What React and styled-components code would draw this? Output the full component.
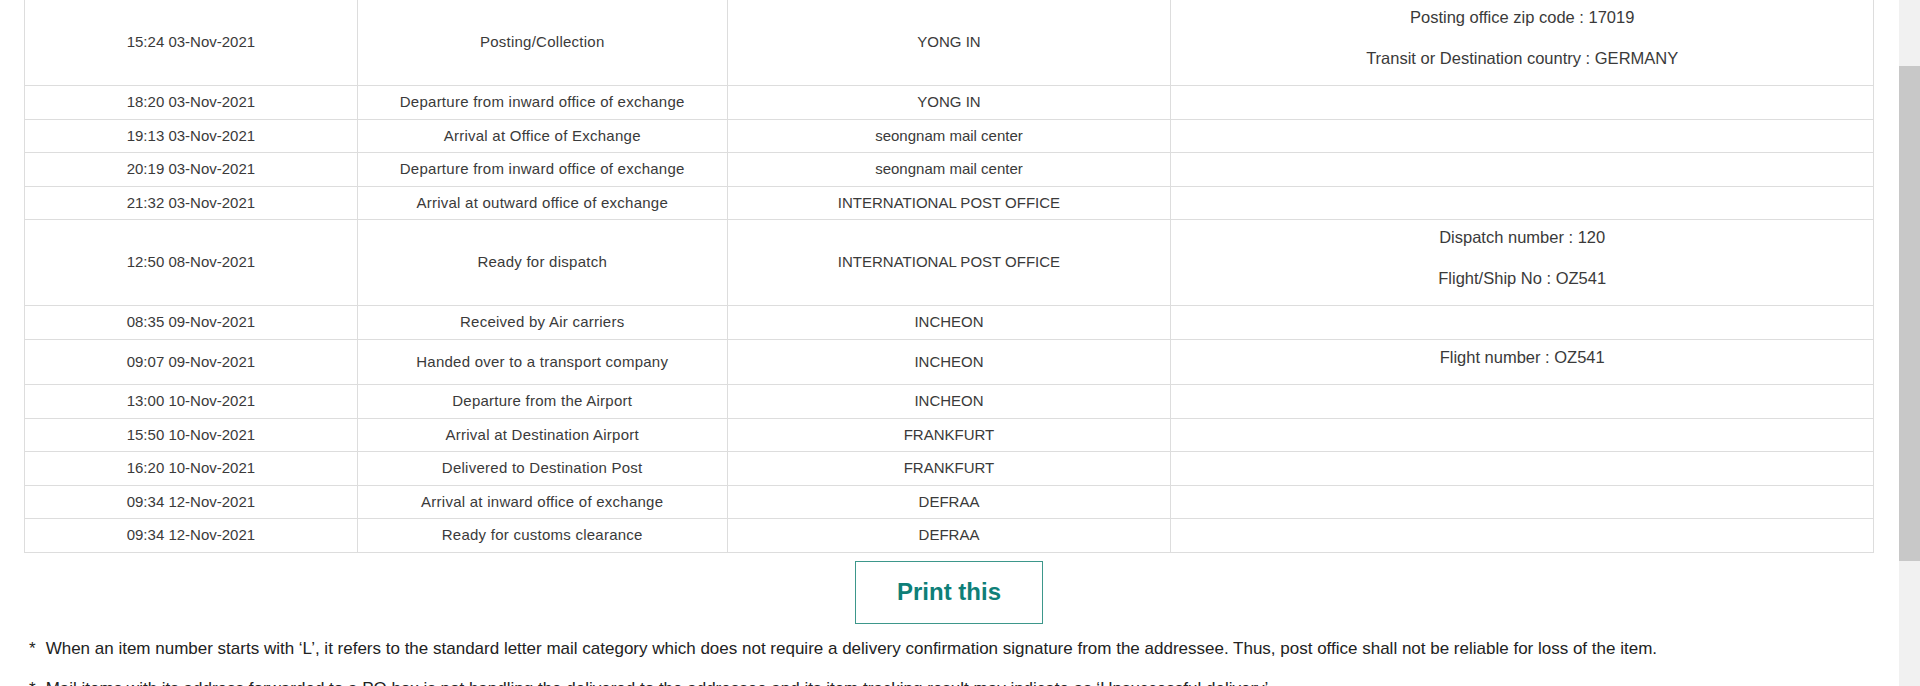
import React from "react";
import styled, { createGlobalStyle } from "styled-components";

const GlobalStyle = createGlobalStyle`
  html, body {
    margin: 0;
    padding: 0;
    background: #ffffff;
    overflow: hidden;
  }
  body {
    font-family: "Liberation Sans", Arial, sans-serif;
    color: #3a3a3a;
  }
`;

const Viewport = styled.div`
  display: flex;
  flex-direction: row;
  width: 1920px;
  height: 686px;
  overflow: hidden;
`;

const Main = styled.main`
  flex: 1 1 auto;
  min-width: 0;
  padding: 0 25px 0 24px;
  overflow: hidden;
`;

const ScrollTrack = styled.div`
  flex: 0 0 21px;
  width: 21px;
  background: #f1f1f1;
  display: flex;
  flex-direction: column;
`;

const ScrollThumb = styled.div`
  margin-top: 66px;
  height: 495px;
  background: #c8c8c8;
`;

const TrackTable = styled.table`
  width: 100%;
  margin-top: -1px;
  border-collapse: collapse;
  table-layout: fixed;
  border: 1px solid #dddddd;
`;

const Cell = styled.td`
  border: 1px solid #dddddd;
  padding: 5px 10px;
  font-size: 15px;
  line-height: 22.5px;
  letter-spacing: ${(p) => (p.$wide ? "0.25px" : "0")};
  text-align: center;
  vertical-align: middle;
  color: #3a3a3a;
`;

const NoteCell = styled.td`
  border: 1px solid #dddddd;
  padding: 0 10px;
  font-size: 16.5px;
  line-height: 27px;
  text-align: center;
  vertical-align: middle;
  color: #3a3a3a;
`;

const NoteLine = styled.p`
  margin: 4px 0 13.5px;
`;

const PrintButton = styled.button`
  display: block;
  margin: 8px auto 0;
  width: 188px;
  height: 63px;
  border: 1px solid #3d978b;
  background: #ffffff;
  color: #0e7f78;
  font-family: "Liberation Sans", Arial, sans-serif;
  font-weight: bold;
  font-size: 24px;
  cursor: pointer;
`;

const Notices = styled.div`
  margin-top: 13px;
  padding-left: 5px;
`;

const Notice = styled.p`
  margin: 0 0 16px;
  font-size: 17px;
  line-height: 24px;
  color: #222222;
  white-space: nowrap;
`;

const Star = styled.span`
  display: inline-block;
  margin-right: 10px;
`;

const rows = [
  {
    time: "15:24 03-Nov-2021",
    status: "Posting/Collection",
    office: "YONG IN",
    notes: ["Posting office zip code : 17019", "Transit or Destination country : GERMANY"],
  },
  { time: "18:20 03-Nov-2021", status: "Departure from inward office of exchange", office: "YONG IN" },
  { time: "19:13 03-Nov-2021", status: "Arrival at Office of Exchange", office: "seongnam mail center" },
  { time: "20:19 03-Nov-2021", status: "Departure from inward office of exchange", office: "seongnam mail center" },
  { time: "21:32 03-Nov-2021", status: "Arrival at outward office of exchange", office: "INTERNATIONAL POST OFFICE" },
  {
    time: "12:50 08-Nov-2021",
    status: "Ready for dispatch",
    office: "INTERNATIONAL POST OFFICE",
    notes: ["Dispatch number : 120", "Flight/Ship No : OZ541"],
  },
  { time: "08:35 09-Nov-2021", status: "Received by Air carriers", office: "INCHEON" },
  {
    time: "09:07 09-Nov-2021",
    status: "Handed over to a transport company",
    office: "INCHEON",
    notes: ["Flight number : OZ541"],
  },
  { time: "13:00 10-Nov-2021", status: "Departure from the Airport", office: "INCHEON" },
  { time: "15:50 10-Nov-2021", status: "Arrival at Destination Airport", office: "FRANKFURT" },
  { time: "16:20 10-Nov-2021", status: "Delivered to Destination Post", office: "FRANKFURT" },
  { time: "09:34 12-Nov-2021", status: "Arrival at inward office of exchange", office: "DEFRAA" },
  { time: "09:34 12-Nov-2021", status: "Ready for customs clearance", office: "DEFRAA" },
];

export default function App() {
  return (
    <>
      <GlobalStyle />
      <Viewport>
        <Main>
          <TrackTable>
            <colgroup>
              <col style={{ width: "18%" }} />
              <col style={{ width: "20%" }} />
              <col style={{ width: "24%" }} />
              <col style={{ width: "38%" }} />
            </colgroup>
            <tbody>
              {rows.map((r, i) => (
                <tr key={i}>
                  <Cell>{r.time}</Cell>
                  <Cell $wide>{r.status}</Cell>
                  <Cell>{r.office}</Cell>
                  {r.notes ? (
                    <NoteCell>
                      {r.notes.map((n) => (
                        <NoteLine key={n}>{n}</NoteLine>
                      ))}
                    </NoteCell>
                  ) : (
                    <Cell />
                  )}
                </tr>
              ))}
            </tbody>
          </TrackTable>
          <PrintButton type="button">Print this</PrintButton>
          <Notices>
            <Notice>
              <Star>*</Star>When an item number starts with ‘L’, it refers to the standard letter mail category which does not require a delivery confirmation signature from the addressee. Thus, post office shall not be reliable for loss of the item.
            </Notice>
            <Notice>
              <Star>*</Star>Mail items with its address forwarded to a PO box is not handling the delivered to the addressee and its item tracking result may indicate as ‘Unsuccessful delivery’.
            </Notice>
          </Notices>
        </Main>
        <ScrollTrack>
          <ScrollThumb />
        </ScrollTrack>
      </Viewport>
    </>
  );
}
